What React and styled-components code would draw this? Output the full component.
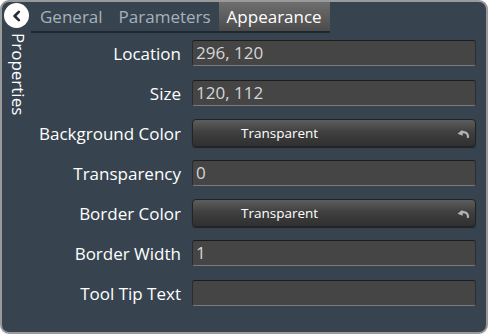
import React from 'react'
import styled, { createGlobalStyle } from 'styled-components'

const Global = createGlobalStyle`
    body {
        margin: 0;
        background: #ffffff;
        font-family: "Open Sans", "Noto Sans", sans-serif;
    }
`

const rows = [
    { label: 'Location', value: '296, 120' },
    { label: 'Size', value: '120, 112' },
    { label: 'Background Color', color: 'Transparent' },
    { label: 'Transparency', value: '0' },
    { label: 'Border Color', color: 'Transparent' },
    { label: 'Border Width', value: '1' },
    { label: 'Tool Tip Text', value: '' },
]

const tabs = ['General', 'Parameters', 'Appearance']

const CurlIcon = () => (
    <svg width="13" height="9" viewBox="0 0 13 9">
        <path d="M12 8 C12 4 9.5 2.5 5.5 3.2" fill="none" stroke="#b3b3b3" strokeWidth="2.2" strokeLinecap="round" />
        <path d="M1.5 4.8 L6.5 0.8 L6.8 6.8 Z" fill="#b3b3b3" />
    </svg>
)

const App = () => {
    return (
        <>
            <Global />
            <Panel>
                <SideBar>
                    <BackButton>
                        <svg width="12" height="12" viewBox="0 0 12 12">
                            <path d="M7.8 1.8 L3.6 6 L7.8 10.2" fill="none" stroke="#262c31" strokeWidth="2.6" strokeLinecap="round" strokeLinejoin="round" />
                        </svg>
                    </BackButton>
                    <SideTitle>Properties</SideTitle>
                </SideBar>
                <Main>
                    <TabStrip>
                        {tabs.map(t => (
                            <Tab key={t} active={t === 'Appearance'}>{t}</Tab>
                        ))}
                    </TabStrip>
                    <Form>
                        {rows.map(r => (
                            <Row key={r.label}>
                                <Label>{r.label}</Label>
                                {r.color ? (
                                    <ColorButton>
                                        <span>{r.color}</span>
                                        <CurlIcon />
                                    </ColorButton>
                                ) : (
                                    <Field>{r.value}</Field>
                                )}
                            </Row>
                        ))}
                    </Form>
                </Main>
            </Panel>
        </>
    )
}

export default App

const Panel = styled.div`
    box-sizing: border-box;
    width: 488px;
    height: 334px;
    display: flex;
    background-color: #37444f;
    border: 2px solid #9a9a9a;
    border-radius: 9px;
    overflow: hidden;
`

const SideBar = styled.div`
    width: 29px;
    display: flex;
    flex-direction: column;
    align-items: center;
    padding-top: 1px;
`

const BackButton = styled.div`
    width: 25px;
    height: 25px;
    border-radius: 50%;
    background-color: #ffffff;
    display: flex;
    align-items: center;
    justify-content: center;
`

const SideTitle = styled.div`
    writing-mode: vertical-rl;
    color: #ffffff;
    font-size: 17px;
    line-height: 20px;
    margin-top: 5px;
    margin-left: 2px;
`

const Main = styled.div`
    flex: 1;
    display: flex;
    flex-direction: column;
`

const TabStrip = styled.div`
    align-self: flex-start;
    display: flex;
    border-bottom: 2px solid #1f2830;
    height: 29px;
    padding-left: 1px;
`

const Tab = styled.div`
    padding: 0 8px;
    display: flex;
    align-items: center;
    font-size: 17px;
    color: ${p => (p.active ? '#ffffff' : '#a7b1ba')};
    background: ${p => (p.active ? 'linear-gradient(#6e6e6e, #4b4b4b)' : 'transparent')};
`

const Form = styled.div`
    display: flex;
    flex-direction: column;
`

const Row = styled.div`
    height: 40px;
    display: grid;
    grid-template-columns: 150px 1fr;
    column-gap: 11px;
    align-items: center;
    padding-right: 10px;
`

const Label = styled.div`
    text-align: right;
    color: #ffffff;
    font-size: 17px;
`

const Field = styled.div`
    box-sizing: border-box;
    height: 26px;
    background-color: #454545;
    border: 1px solid #2c2c2c;
    border-top-color: #1c1c1c;
    border-bottom-color: #7a7a7a;
    border-radius: 3px;
    color: #d6d6d6;
    font-size: 17px;
    line-height: 24px;
    padding-left: 3px;
`

const ColorButton = styled.div`
    box-sizing: border-box;
    height: 28px;
    display: flex;
    align-items: center;
    justify-content: space-between;
    padding: 0 6px 0 48px;
    background: linear-gradient(#5e5e5e, #404040 45%, #303030);
    border: 1px solid #232323;
    border-radius: 4px;
    box-shadow: 0 1px 1px rgba(0, 0, 0, 0.5);
    color: #ffffff;
    font-size: 13.5px;
`
